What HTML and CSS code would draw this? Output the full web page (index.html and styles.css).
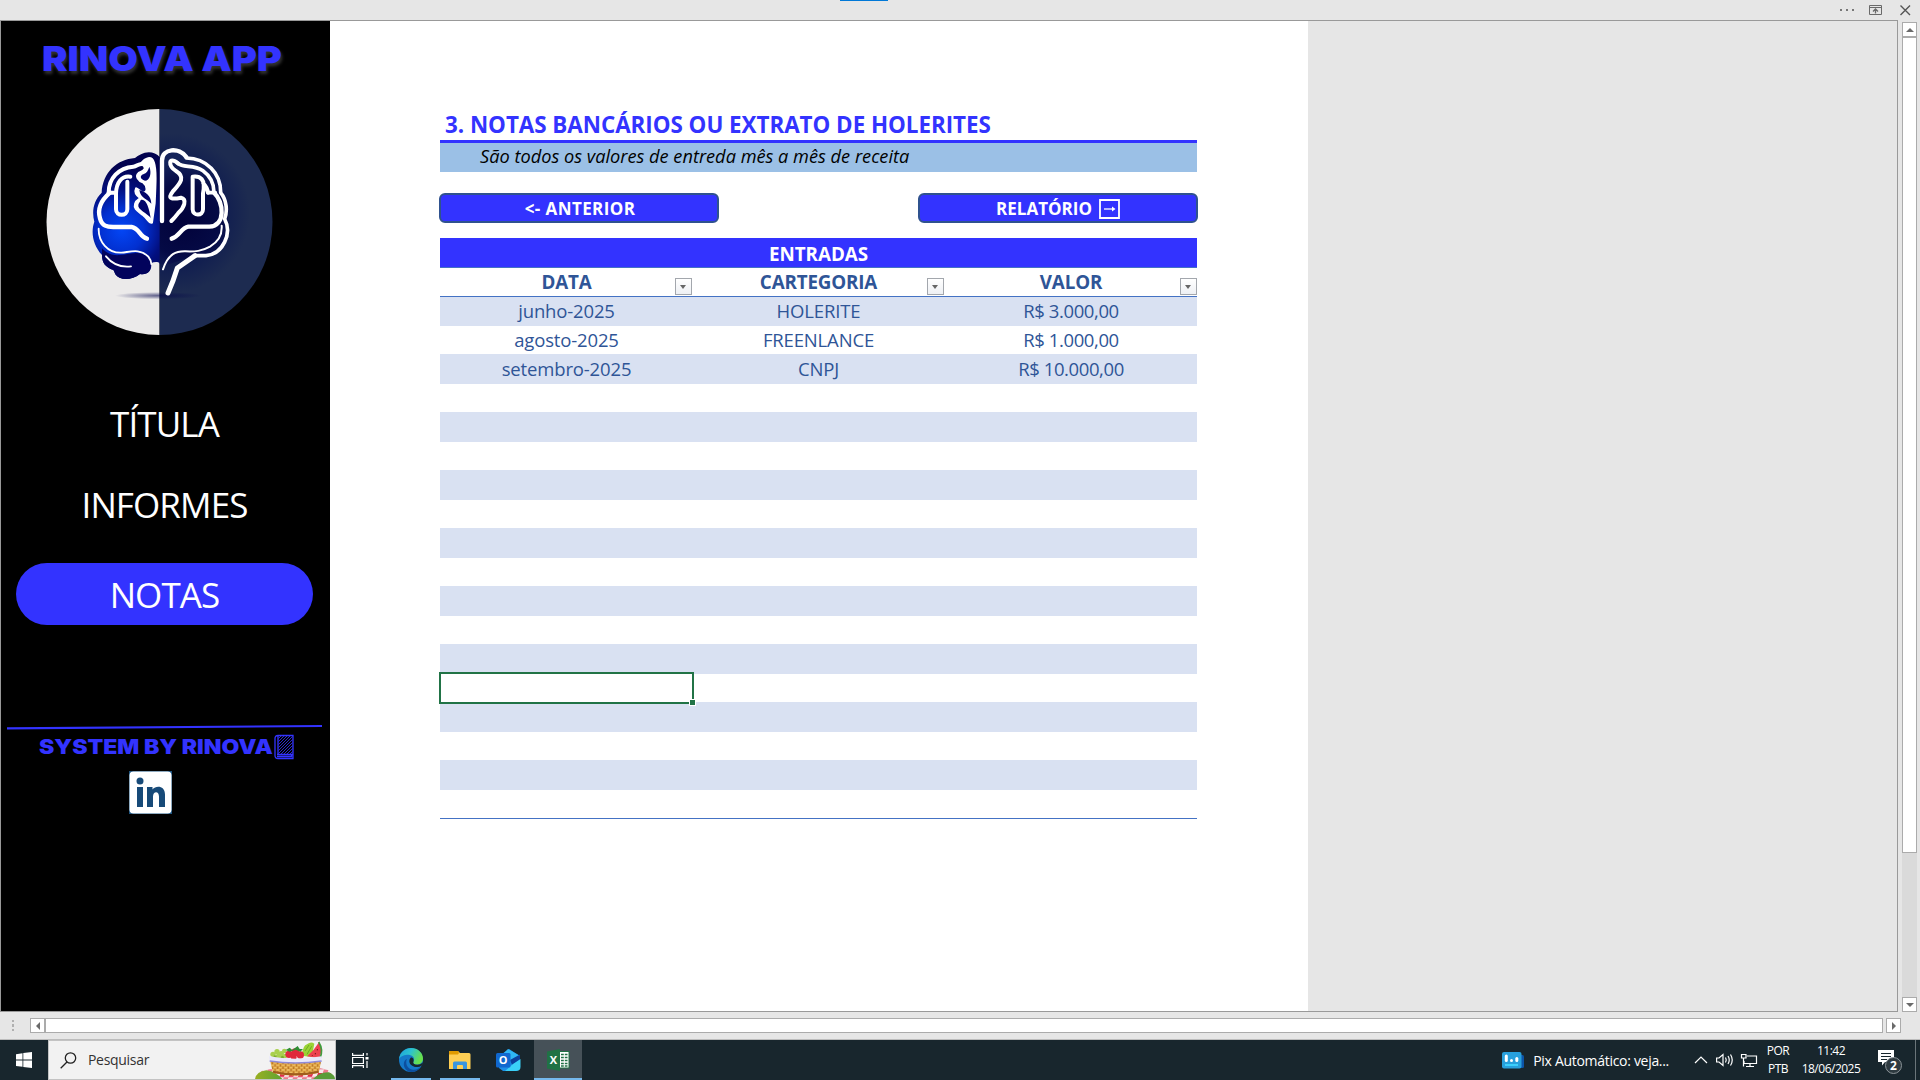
FILE: index.html
```html
<!DOCTYPE html>
<html lang="pt-BR">
<head>
<meta charset="utf-8">
<title>Rinova App</title>
<link rel="stylesheet" href="styles.css">
</head>
<body>
<div class="window">
  <header class="titlebar">
    <span class="drag-tab"></span>
    <svg class="window-icons" width="80" height="20" viewBox="0 0 80 20">
      <g fill="#777"><rect x="8" y="9" width="2" height="2"/><rect x="14" y="9" width="2" height="2"/><rect x="20" y="9" width="2" height="2"/></g>
      <g fill="none" stroke="#6a6a6a">
        <path d="M37.500 5.500H49.500V14.500H37.500Z M37.500 7.500H49.500"/>
        <path d="M43.500 9V13.500 M41 11.500L43.500 9L46 11.500" stroke-width="1.300"/>
        <path d="M68.500 5.500L78 15 M78 5.500L68.500 15" stroke-width="1.400" stroke="#555"/>
      </g>
    </svg>
  </header>

  <div class="workspace">
    <main class="viewport">
      <aside class="sidebar">
        <h1 class="brand"><span>RINOVA APP</span></h1>
        <svg class="logo" width="227" height="226" viewBox="46 109 227 226">
          <defs>
            <clipPath id="disc"><circle cx="159.500" cy="222" r="113"/></clipPath>
            <clipPath id="leftHalf"><path d="M0 -100H239V520H0Z"/></clipPath>
            <radialGradient id="lobe" gradientUnits="userSpaceOnUse" cx="125" cy="270" r="190">
              <stop offset="0" stop-color="#0346f5"/><stop offset=".35" stop-color="#0230d0"/><stop offset=".65" stop-color="#020f80"/><stop offset="1" stop-color="#02024f"/>
            </radialGradient>
            <radialGradient id="lobeDark" gradientUnits="userSpaceOnUse" cx="310" cy="240" r="180">
              <stop offset="0" stop-color="#02023a"/><stop offset=".6" stop-color="#050a45"/><stop offset="1" stop-color="#14235a"/>
            </radialGradient>
            <radialGradient id="glow" gradientUnits="userSpaceOnUse" cx="270" cy="220" r="240">
              <stop offset="0" stop-color="#04073f"/><stop offset=".65" stop-color="#101d50"/><stop offset="1" stop-color="#1d2b50"/>
            </radialGradient>
            <radialGradient id="shade"><stop offset="0" stop-color="#03044a" stop-opacity=".6"/><stop offset="1" stop-color="#03044a" stop-opacity="0"/></radialGradient>
          </defs>
          <g clip-path="url(#disc)">
            <rect x="46" y="109" width="113.500" height="226" fill="#ebeaea"/>
            <g transform="translate(80 140) scale(.33333)">
              <rect x="239" y="-100" width="350" height="700" fill="url(#glow)"/>
              <ellipse cx="235" cy="467" rx="130" ry="11" fill="url(#shade)"/>
              <path fill="url(#lobe)" d="M240 52C225 34 200 33 183 43Q172 48 165 54C110 58 68 98 65 158C40 182 35 215 43 245C32 275 38 315 66 345C66 368 76 382 100 390C102 392 104 398 106 403C118 422 155 422 180 402C205 406 217 390 213 370C222 366 232 364 240 370Z"/>
              <path fill="url(#lobeDark)" d="M239 55C250 30 295 20 325 52C380 54 425 90 430 155C450 185 450 210 443 235C455 270 445 345 350 347Q300 360 270 372H239Z"/>
              <g clip-path="url(#leftHalf)">
                <path fill="#02035c" d="M66 345C66 368 76 382 100 390C102 392 104 398 106 403C118 422 155 422 180 402C205 406 217 390 210 365C190 325 160 342 120 345C90 348 75 335 66 325Z"/>
              </g>
              <g fill="none" stroke="#fff" stroke-linecap="round" stroke-linejoin="round">
                <g stroke-width="12">
                  <path d="M86 158C86 115 116 83 160 80C172 79 174 70 189 72"/>
                  <path d="M86 158H108 M151 110C125 106 109 128 108 160V208C108 230 142 230 142 208V125"/>
                  <path d="M90 158C62 182 52 208 60 235C66 258 80 262 105 261H155C178 264 178 290 201 296" stroke-width="13"/>
                </g>
                <path fill="#fff" stroke-width="6" d="M183 70C195 54 215 45 222 68C229 90 227 130 224 190L216 248C208 252 202 235 190 226C176 214 160 208 165 192C170 177 180 178 180 174C169 164 162 158 168 145C174 146 180 154 189 158C203 158 203 138 190 128C174 122 165 108 176 99C188 93 206 87 183 70Z"/>
                <g fill="#02056a" stroke="none">
                  <path d="M208 80C216 100 209 122 195 122C181 119 178 107 190 103C200 100 204 92 208 80Z"/>
                  <path d="M182 180C198 174 207 202 212 234C203 220 171 208 175 194C177 186 181 187 182 180Z"/>
                  <path d="M178 150C197 156 213 166 214 191C203 178 181 174 178 150Z"/>
                </g>
                <path stroke-width="5.500" d="M56 266C55 305 83 340 125 338C150 336 180 324 205 350Q213 360 214 372 M78 349C91 365 112 384 153 379"/>
                <path stroke-width="13" d="M246 243V62C246 24 298 21 319 51"/>
                <path stroke-width="11" d="M319 54C380 55 423 100 422 158C440 180 443 212 434 237C457 280 429 342 378 347H345"/>
                <path stroke-width="15" d="M345 347L292 384C284 410 275 435 264 459"/>
                <path stroke-width="12" d="M294 70C264 46 264 80 287 92C320 112 298 132 278 155C260 178 278 178 303 173C322 178 313 203 294 220Q285 232 274 243"/>
                <path stroke-width="11" d="M294 70C310 85 340 72 369 92C394 110 402 130 402 157 M384 158H406"/>
                <path stroke-width="12" d="M338 110V208C339 230 369 228 369 208V160C378 116 360 107 338 110M370 130Q382 142 384 158"/>
                <path stroke-width="13" d="M402 158C432 186 438 258 388 260H325C302 264 300 288 275 296"/>
                <path stroke-width="6" d="M249 388C265 340 290 333 317 334C345 335 365 334 390 320C412 307 427 285 425 257"/>
              </g>
            </g>
          </g>
        </svg>
        <nav class="menu">
          <a class="menu-item">TÍTULA</a>
          <a class="menu-item">INFORMES</a>
          <a class="menu-item active">NOTAS</a>
        </nav>
        <svg class="divider" width="316" height="6" viewBox="0 0 316 6"><path d="M0 4.300L315 2" stroke="#33f" stroke-width="2.200"/></svg>
        <div class="credit">
          <span>SYSTEM BY RINOVA</span>
          <svg width="20" height="26" viewBox="0 0 20 26">
            <defs><pattern id="hatch" width="3" height="3" patternUnits="userSpaceOnUse"><path d="M-1 4L4 -1M-1 1L1 -1M2 4L4 2" stroke="#33f" stroke-width=".8"/></pattern></defs>
            <path d="M4 1.500H19V24.500H4Q1 24.500 1 21.500V4.500Q1 1.500 4 1.500Z M4 2V20 M3 20.500H18.500 M3 22.500H17.500V20" fill="none" stroke="#33f" stroke-width="1.300"/>
            <rect x="4.500" y="2" width="14" height="18" fill="url(#hatch)"/>
          </svg>
        </div>
        <svg class="linkedin" width="43" height="43" viewBox="0 0 43 43">
          <rect width="43" height="43" fill="#1d5480"/><rect x=".5" y=".5" width="42" height="42" rx="4" fill="#fff"/>
          <g fill="#174a78"><circle cx="11" cy="10" r="3.500"/><rect x="8" y="16" width="6" height="20"/>
          <path d="M18 16H23.500V18.500C27 14 36 14.500 36 23.500V36H30V25.500C30 19.500 24 20 24 25.500V36H18Z"/></g>
        </svg>
      </aside>

      <section class="sheet">
        <h2 class="sheet-title">3. NOTAS BANCÁRIOS OU EXTRATO DE HOLERITES</h2>
        <p class="sheet-note">São todos os valores de entreda mês a mês de receita</p>
        <div class="actions">
          <button class="action prev">&lt;- ANTERIOR</button>
          <button class="action next">RELATÓRIO
            <svg width="21" height="20" viewBox="0 0 21 20"><path d="M1 1H20V19H1Z" fill="none" stroke="#fff" stroke-width="1.800"/><path d="M5 10H15" stroke="#fff" stroke-width="1.300"/><path d="M13 7.500L16.500 10L13 12.500Z" fill="#fff"/></svg>
          </button>
        </div>
        <div class="table">
          <div class="table-caption">ENTRADAS</div>
          <div class="row head">
            <div class="cell">DATA<i class="filter"></i></div><div class="cell">CARTEGORIA<i class="filter"></i></div><div class="cell">VALOR<i class="filter"></i></div>
          </div>
          <div class="row"><div class="cell">junho-2025</div><div class="cell">HOLERITE</div><div class="cell money">R$ 3.000,00</div></div>
          <div class="row"><div class="cell">agosto-2025</div><div class="cell">FREENLANCE</div><div class="cell money">R$ 1.000,00</div></div>
          <div class="row"><div class="cell">setembro-2025</div><div class="cell">CNPJ</div><div class="cell money">R$ 10.000,00</div></div>
          <div class="row"></div><div class="row"></div><div class="row"></div><div class="row"></div><div class="row"></div>
          <div class="row"></div><div class="row"></div><div class="row"></div><div class="row"></div><div class="row"></div>
          <div class="row"><div class="cell"><i class="selection"></i></div></div>
          <div class="row"></div><div class="row"></div><div class="row"></div><div class="row"></div>
        </div>
      </section>
    </main>

    <div class="vscroll">
      <span class="sbtn up"></span><span class="vthumb"></span><span class="vtrack"></span><span class="sbtn down"></span>
    </div>
  </div>

  <div class="hscroll">
    <span class="grip"></span><span class="sbtn left"></span><span class="hthumb"></span><span class="sbtn right"></span>
  </div>

  <footer class="taskbar">
    <div class="start">
      <svg width="16" height="16" viewBox="0 0 16 16" fill="#fff"><path d="M0 2.200L6.500 1.200V7.500H0ZM7.300 1.100L16 0V7.500H7.300ZM0 8.400H6.500V14.800L0 13.900ZM7.300 8.400H16V16L7.300 14.900Z"/></svg>
    </div>
    <div class="search">
      <svg class="lens" width="17" height="17" viewBox="0 0 17 17" fill="none" stroke="#222" stroke-width="1.300"><circle cx="10.500" cy="6" r="5.200"/><path d="M7 10L.7 16.300"/></svg>
      <span>Pesquisar</span>
      <svg class="basket" width="80" height="38" viewBox="0 0 240 114">
        <defs>
          <pattern id="cloth" width="28" height="24" patternUnits="userSpaceOnUse" patternTransform="skewX(-20)"><rect width="28" height="24" fill="#f9e8ec"/><rect width="14" height="12" fill="#e12b4b"/><rect x="14" y="12" width="14" height="12" fill="#ee7a8c"/></pattern>
          <pattern id="weave" width="16" height="14" patternUnits="userSpaceOnUse"><rect width="16" height="14" fill="#d99a3c"/><path d="M0 3H9M8 10H16" stroke="#f1c46a" stroke-width="4"/><path d="M12 0V7M4 7V14" stroke="#a86420" stroke-width="2"/></pattern>
          <linearGradient id="hill"><stop offset="0" stop-color="#9aaf22"/><stop offset="1" stop-color="#5da432"/></linearGradient>
        </defs>
        <path d="M20 90Q120 62 222 88L238 114H10Z" fill="url(#cloth)"/>
        <path d="M0 114Q4 92 34 88Q62 92 82 114Z" fill="url(#hill)"/><path d="M174 114Q196 92 222 94Q240 102 240 114Z" fill="#5a9c38"/>
        <path d="M140 44Q144 12 156 10Q168 0 178 8L170 48Z" fill="#9bd335"/><path d="M150 30L162 12M156 40L170 16" stroke="#6cae22" stroke-width="3"/>
        <g fill="#a9d04e"><circle cx="54" cy="40" r="8"/><circle cx="66" cy="32" r="8"/><circle cx="79" cy="38" r="8"/><circle cx="70" cy="46" r="8"/><circle cx="88" cy="30" r="7"/><circle cx="90" cy="45" r="7"/></g>
        <g fill="#7fae2f"><circle cx="60" cy="48" r="5"/><circle cx="82" cy="49" r="5"/></g>
        <g fill="#e0283c"><circle cx="102" cy="40" r="11"/><circle cx="121" cy="34" r="12"/><circle cx="136" cy="42" r="11"/><circle cx="116" cy="48" r="9"/></g>
        <path d="M92 27L104 20L112 27L128 15L134 24L144 24L136 32L122 26L104 32Z" fill="#2f8e34"/>
        <path d="M192 4Q204 24 194 52L156 46Q178 28 192 4Z" fill="#ee4250"/><path d="M191 3Q206 26 195 52" fill="none" stroke="#3f9c3c" stroke-width="5"/><path d="M181 36V40M187 24V28M172 42V44" stroke="#6b1520" stroke-width="3"/>
        <path d="M46 62H198L191 96Q120 112 54 96Z" fill="url(#weave)"/><path d="M54 92Q120 108 191 92" fill="none" stroke="#9f5c1c" stroke-width="6"/>
        <path d="M42 46Q120 60 200 46V60Q120 72 44 60Z" fill="#e9e8fb"/><path d="M44 60Q120 72 200 60" fill="none" stroke="#8f8ad8" stroke-width="5"/>
      </svg>
    </div>
    <div class="task view">
      <svg width="17" height="16" viewBox="0 0 17 16" fill="none" stroke="#fff" stroke-width="1.200"><path d="M.6 1V3.400H11.400V1M.6 16V13.600H11.400V16M.6 5.500H11.400V11.500H.6ZM15 1V3.500M15 9V16"/><rect x="13.500" y="5" width="3" height="2.500" fill="#fff" stroke="none"/></svg>
    </div>
    <div class="task open">
      <svg width="24" height="24" viewBox="0 0 24 24">
        <defs><linearGradient id="e1" x1="0" y1="0" x2="1" y2=".4"><stop offset="0" stop-color="#1c9fdc"/><stop offset=".5" stop-color="#2cc3d0"/><stop offset="1" stop-color="#68e04a"/></linearGradient></defs>
        <circle cx="12" cy="12" r="12" fill="#1579c9"/>
        <path d="M0 11C1 4 6 0 12 0C19 0 24 5 24 10.500C24 14.500 21 16.500 18 16.500C14.500 16.500 13.500 15 14.500 13.500C17 9 12 6.500 8 6.800C4 7 1 9 0 11Z" fill="url(#e1)"/>
        <path d="M8 11C6 15 8 20.500 13 21.500C17 22.300 20 20.500 22.500 18C20 22 16.500 24 12.500 24C7 23.500 4 19 5 14.500C5.500 12.500 6.500 11.500 8 11Z" fill="#0c4f9e"/>
        <path d="M12 9.500C9 12 10 17.500 15.500 18.700C18.500 19.200 21 18.500 22.800 17.200C20 19.500 13 17 14.500 13.500C15 12 14.500 9.500 12 9.500Z" fill="#18262d"/>
        <path d="M24 14.500L23 17.500Q20 19.500 16 18.800Q13.500 17.500 14 15.500Q19 18.500 24 14.500Z" fill="#18262d"/>
      </svg>
    </div>
    <div class="task open">
      <svg width="22" height="19" viewBox="0 0 22 19"><path d="M0 1Q0 0 1 0H9L11 2H20Q21.500 2 21.500 3.500V18H0Z" fill="#ffcf54"/><path d="M0 1Q0 0 1 0H9L10 2L9 3.500H0Z" fill="#e19b00"/><path d="M4 18V12Q4 10.500 5.500 10.500H16.500Q18 10.500 18 12V18H14V15Q14 14 13 14H9Q8 14 8 15V18Z" fill="#3b95df"/></svg>
    </div>
    <div class="task">
      <svg class="outlook" width="25" height="23" viewBox="0 0 25 23"><path d="M3 7L13 0L24 7V19L20 22H7L3 19Z" fill="#1c8fe6"/><path d="M12 0L24 7L16 13L8 4Z" fill="#2fb6f5"/><path d="M14 11L24 5.500V11L16 16Z" fill="#0c3f9c"/><path d="M24.500 10V18Q24.500 22 20 22H9L17 15Z" fill="#3ad0f8"/><rect y="4" width="14.500" height="14.500" rx="1.500" fill="#1068cf"/><text x="7.200" y="15.300" text-anchor="middle" class="glyph">O</text></svg>
    </div>
    <div class="task open current">
      <svg width="23" height="22" viewBox="0 0 23 22"><rect x="11" y="2.500" width="11" height="16.500" fill="#fff" stroke="#207245"/><path d="M14 5.500H20.500M14 8.500H20.500M14 11.500H20.500M14 14.500H20.500M14 17H20.500" stroke="#207245" stroke-width="1.300"/><path d="M17.300 4V18" stroke="#fff"/><path d="M0 2.500L13 0V22L0 19.500Z" fill="#207245"/><text x="6.500" y="15.300" text-anchor="middle" class="glyph">X</text></svg>
    </div>
    <div class="news">
      <svg width="23" height="17" viewBox="0 0 23 17"><rect x="14" y="3" width="8" height="13" rx="1.500" fill="#0c55a8"/><rect width="19.500" height="16.500" rx="2" fill="#28a0dc"/><path d="M4.300 4V8.500" stroke="#fff" stroke-width="3" stroke-linecap="round"/><circle cx="9.500" cy="8.500" r="1.500" fill="#fff"/><path d="M14.800 6.500V8.500" stroke="#fff" stroke-width="3" stroke-linecap="round"/><path d="M3 13H16" stroke="#3fd6ff" stroke-width="1.800"/></svg>
      <span>Pix Automático: veja...</span>
    </div>
    <div class="tray">
      <svg width="64" height="16" viewBox="0 0 64 16" fill="none" stroke="#fff" stroke-width="1.200">
        <path d="M1 11L7 5L13 11"/>
        <path d="M22.600 6H25L29 2.500V13.500L25 10H22.600Z"/><path d="M31.500 5.500Q33 8 31.500 10.500M34 4Q36.500 8 34 12M36.500 2.500Q40 8 36.500 13.500"/>
        <path d="M53 4H62.500V11.500H50V9M56 12V14M52 14.500H60M47.500 2.500H52V6H47.500ZM49.500 6V14.500"/>
      </svg>
      <div class="stack lang"><span>POR</span><span>PTB</span></div>
      <div class="stack clock"><span>11:42</span><span class="date">18/06/2025</span></div>
      <svg class="bell" width="26" height="26" viewBox="0 0 26 26"><path d="M0 0H16V12H7L4 15.500V12H0Z" fill="#fff"/><path d="M3 3.500H13M3 6.500H13M3 9.500H9" stroke="#18262d" stroke-width="1.100"/><circle cx="15.500" cy="15.500" r="8" fill="#2e3a40" stroke="#8b9398"/><text x="15.500" y="20" text-anchor="middle" class="badge">2</text></svg>
      <span class="peek"></span>
    </div>
  </footer>
</div>
</body>
</html>
```
FILE: styles.css
```css
* { box-sizing: border-box; }

body {
  margin: 0;
  font-family: "Open Sans", "Noto Sans", sans-serif;
  background: #e6e6e6;
}

.window {
  display: flex;
  flex-direction: column;
  width: 1920px;
  height: 1080px;
  overflow: hidden;
  background: #e6e6e6;
}

/* Title strip */
.titlebar {
  flex: none;
  display: flex;
  justify-content: space-between;
  height: 20px;
  padding: 0 8px 0 840px;
}
.drag-tab { width: 48px; height: 1px; background: #0078d7; }
.window-icons { display: block; }

/* Workspace */
.workspace { flex: none; display: flex; height: 992px; }
.viewport {
  display: flex;
  width: 1898px;
  border: 1px solid #999;
}

/* Sidebar */
.sidebar {
  flex: none;
  display: flex;
  flex-direction: column;
  align-items: flex-start;
  width: 329px;
  background: #000;
}
.brand {
  margin: 18px 0 0 41px;
  font: 900 34.500px/40px Inter, "Open Sans", sans-serif;
  color: #33f;
  text-shadow: 1px 3px 3px rgba(100, 100, 100, .5);
}
.brand span { display: inline-block; transform: scaleX(1.11); transform-origin: 0 50%; white-space: nowrap; }
.logo { display: block; margin: 30px 0 0 45px; }
.menu { display: flex; flex-direction: column; align-items: center; width: 297px; margin: 58px 0 0 15px; }
.menu-item {
  width: 297px;
  height: 62px;
  font-size: 35px;
  line-height: 62px;
  letter-spacing: -.9px;
  text-align: center;
  color: #fff;
}
.menu-item + .menu-item { margin-top: 19px; }
.menu-item.active { margin-top: 27px; line-height: 64px; border-radius: 31px; background: #33f; }
.divider { display: block; margin: 99px 0 0 6px; }
.credit { display: flex; align-items: flex-start; width: 260px; margin: 4px 0 0 38px; color: #33f; }
.credit span {
  width: 235px;
  font: 900 20px/26px Inter, "Open Sans", sans-serif;
  white-space: nowrap;
  transform: scaleX(1.15);
  transform-origin: 0 50%;
}
.linkedin { display: block; margin: 11px 0 0 128px; }

/* Sheet */
.sheet {
  flex: none;
  width: 978px;
  padding: 85px 111px 0 110px;
  background: #fff;
}
.sheet-title {
  height: 37px;
  margin: 0;
  padding-left: 5px;
  border-bottom: 3px solid #33f;
  color: #33f;
  font-size: 22.400px;
  line-height: 38px;
  letter-spacing: -.03px;
  white-space: nowrap;
}
.sheet-note {
  height: 29px;
  margin: 0;
  padding-left: 40px;
  font-size: 18.200px;
  font-style: italic;
  line-height: 27px;
  background: #9bc0e6;
  color: #000;
}
.actions { display: flex; justify-content: space-between; margin: 21px -1px 0; }
.action {
  display: flex;
  align-items: center;
  justify-content: center;
  gap: 7px;
  width: 280px;
  height: 30px;
  padding: 1px 0 0;
  border: 2px solid #2f528f;
  border-radius: 6px;
  background: #33f;
  color: #fff;
  font: 700 17px/26px "Open Sans", sans-serif;
}
.prev { padding: 2px 0 0 2px; letter-spacing: .4px; }

.table { margin-top: 15px; border-bottom: 1px solid #4472c4; color: #2f5597; }
.table-caption {
  height: 30px;
  border-bottom: 1px solid #4472c4;
  background: #33f;
  color: #fff;
  font-size: 18.800px;
  font-weight: 700;
  line-height: 32px;
  text-align: center;
}
.row { display: grid; grid-template-columns: 252px 252px 253px; height: 28px; }
.row:nth-child(odd) { height: 30px; background: #d9e1f2; }
.row.head { height: 29px; border-bottom: 1px solid #4472c4; font-weight: 700; }
.row.head + .row { height: 29px; }
.cell { position: relative; height: 28px; padding-left: 1px; font-size: 18.500px; line-height: 27px; letter-spacing: -.15px; text-align: center; }
.row:nth-child(5) .cell { line-height: 29px; }
.row.head .cell { font-size: 18.800px; line-height: 29px; letter-spacing: -.15px; }
.row .cell.money { letter-spacing: -.4px; }
.filter {
  position: absolute;
  right: 0;
  bottom: 1px;
  width: 17px;
  height: 17px;
  border: 1px solid #a3a7ad;
  background: linear-gradient(#fff, #eef0f4);
}
.filter::after {
  content: "";
  position: absolute;
  left: 4px;
  top: 6px;
  border: 3.500px solid transparent;
  border-top: 4px solid #666;
  border-bottom: 0;
}
.selection { position: absolute; left: -1px; top: -2px; width: 255px; height: 32px; border: 2px solid #217346; }
.selection::after {
  content: "";
  position: absolute;
  right: -4px;
  bottom: -4px;
  width: 5px;
  height: 5px;
  border: 1px solid #fff;
  background: #217346;
}

/* Scroll bars */
.sbtn {
  flex: none;
  display: grid;
  place-items: center;
  width: 15px;
  height: 15px;
  border: 1px solid #ababab;
  background: #fff;
}
.sbtn::after { content: ""; border: 4px solid transparent; }
.up::after { border-bottom-color: #6a6a6a; border-top: 0; }
.down::after { border-top-color: #6a6a6a; border-bottom: 0; }
.left::after { border-right-color: #6a6a6a; border-left: 0; }
.right::after { border-left-color: #6a6a6a; border-right: 0; }
.vscroll { display: flex; flex-direction: column; margin: 2px 0 0 4px; width: 15px; height: 990px; }
.vthumb { height: 816px; border: 1px solid #ababab; background: #fff; }
.vtrack { flex: 1; background: #dadada; }
.hscroll {
  flex: none;
  display: flex;
  height: 28px;
  padding: 6px 0 0 12px;
  border-bottom: 1px solid #bcbcbc;
}
.grip {
  width: 2px;
  height: 11px;
  margin: 2px 16px 0 0;
  background: repeating-linear-gradient(#b0b0b0 0 2px, transparent 2px 4.500px);
}
.hthumb { width: 1838px; height: 15px; border: 1px solid #ababab; background: #fff; }
.hscroll .right { margin-left: 3px; }

/* Taskbar */
.taskbar { flex: none; display: flex; height: 40px; background: #18262d; color: #fff; }
.start { display: flex; align-items: center; justify-content: center; width: 48px; }
.search {
  display: flex;
  align-items: center;
  width: 288px;
  padding-left: 11px;
  border: 1px solid #c3c3c3;
  background: #f2f2f2;
  color: #333;
  font-size: 14px;
  letter-spacing: -.3px;
}
.search span { margin-left: 11px; line-height: 38px; }
.basket { display: block; margin-left: auto; }
.task { position: relative; display: flex; align-items: center; justify-content: center; width: 49px; }
.task.view { width: 50px; padding-right: 2px; }
.task.open::after { content: ""; position: absolute; left: 5px; right: 4px; bottom: 0; height: 2px; background: #76b9ed; }
.task.current { width: 48px; margin-left: 1px; background: #465158; }
.task.current::after { left: 0; right: 0; }
.glyph { font: 700 11px "Open Sans", sans-serif; fill: #fff; }
.news { display: flex; align-items: center; gap: 8px; margin-left: auto; font-size: 14px; letter-spacing: -.3px; white-space: nowrap; }
.tray { display: flex; align-items: center; margin-left: 25px; }
.stack { display: flex; flex-direction: column; align-items: center; font-size: 12px; line-height: 18px; letter-spacing: -.5px; }
.lang { width: 24px; margin-left: 8px; }
.clock { width: 60px; margin-left: 11px; }
.bell { margin: 5px 0 0 17px; }
.badge { font: 700 12px "Open Sans", sans-serif; fill: #fff; }
.peek { width: 1px; height: 40px; margin: 0 4px 0 11px; background: #6b757a; }
```
